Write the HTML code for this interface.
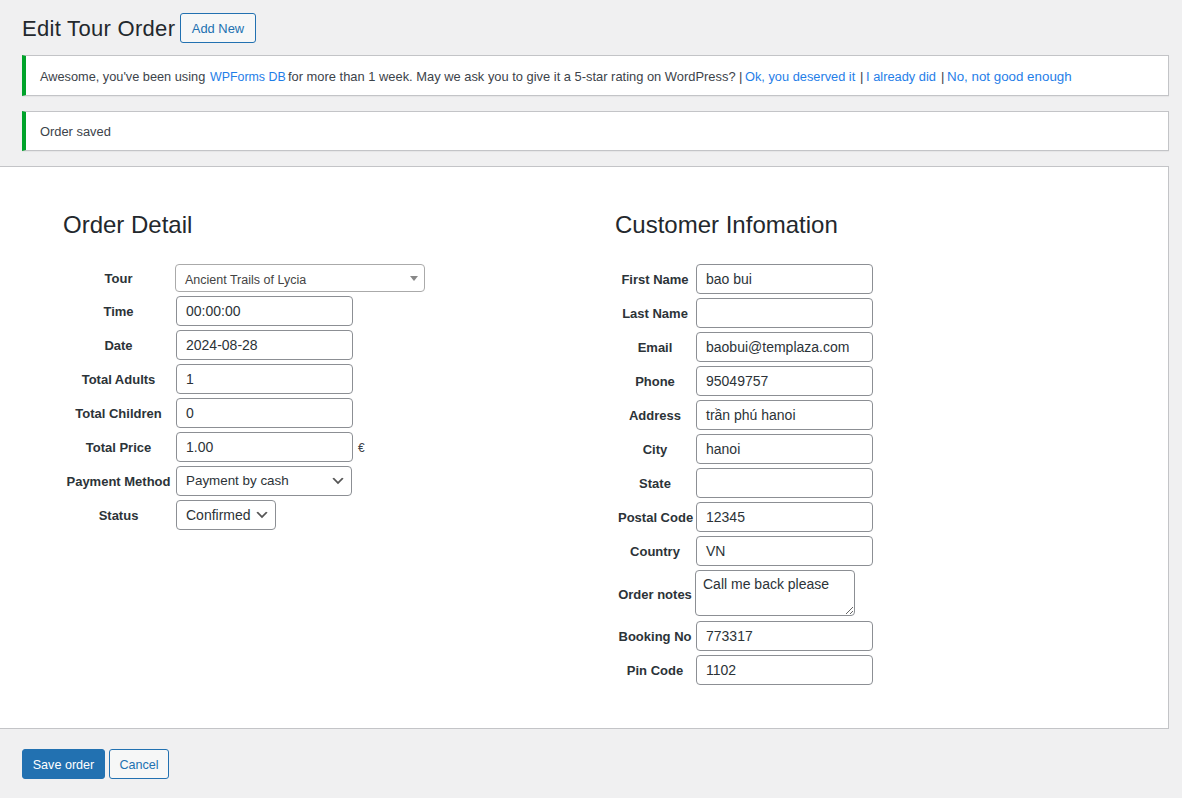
<!DOCTYPE html>
<html>
<head>
<meta charset="utf-8">
<style>
html,body{margin:0;padding:0;}
body{width:1182px;height:798px;overflow:hidden;position:relative;background:#f0f0f1;font-family:"Liberation Sans",sans-serif;color:#3c434a;font-size:13px;}
.abs{position:absolute;white-space:nowrap;}
h1{position:absolute;margin:0;left:22px;top:14px;font-size:22px;letter-spacing:0.3px;font-weight:400;line-height:30px;color:#23282d;}
.pta{position:absolute;left:180px;top:13px;width:76px;height:30px;box-sizing:border-box;border:1px solid #2271b1;border-radius:3px;background:#f6f7f7;color:#2271b1;font-size:12.9px;line-height:30px;text-align:center;}
.notice{position:absolute;left:22px;width:1147px;box-sizing:border-box;background:#fff;border:1px solid #c3c4c7;border-left:4px solid #00a32a;box-shadow:0 1px 1px rgba(0,0,0,.04);}
.notice p{position:absolute;left:14px;margin:0;font-size:12.88px;line-height:20px;white-space:nowrap;}
a{color:#1f7ee8;text-decoration:none;}
.nt{position:absolute;top:67px;font-size:13px;line-height:20px;white-space:nowrap;color:#3c434a;}
.nt.lk{color:#1f7ee8;}
.panel{position:absolute;left:-1px;top:166px;width:1170px;height:563px;box-sizing:border-box;background:#fff;border:1px solid #c3c4c7;}
.h{position:absolute;font-size:24px;line-height:30px;color:#23282d;white-space:nowrap;}
.lbl{position:absolute;font-size:13px;font-weight:bold;color:#2c3338;text-align:center;white-space:nowrap;line-height:20px;}
.inp{position:absolute;box-sizing:border-box;height:30px;border:1px solid #8c8f94;border-radius:4px;background:#fff;color:#2c3338;font-size:14px;line-height:28px;padding-left:9px;white-space:nowrap;}
.btn{position:absolute;box-sizing:border-box;height:30px;top:749px;border-radius:3px;font-size:12.6px;line-height:30px;text-align:center;}
</style>
</head>
<body>
<h1>Edit Tour Order</h1>
<div class="pta">Add New</div>

<div class="notice" style="top:55px;height:41px;"></div>
<div class="nt" style="left:40px;font-size:12.75px;">Awesome, you've been using</div>
<div class="nt lk" style="left:210px;font-size:12.4px;">WPForms DB</div>
<div class="nt" style="left:288px;font-size:12.9px;">for more than 1 week. May we ask you to give it a 5-star rating on WordPress?</div>
<div class="nt" style="left:739px;">|</div>
<div class="nt lk" style="left:745px;font-size:12.8px;">Ok, you deserved it</div>
<div class="nt" style="left:860px;">|</div>
<div class="nt lk" style="left:866px;font-size:12.85px;">I already did</div>
<div class="nt" style="left:941px;">|</div>
<div class="nt lk" style="left:947px;font-size:13.35px;">No, not good enough</div>
<div class="notice" style="top:111px;height:40px;"><p style="top:10px;">Order saved</p></div>

<div class="panel"></div>

<div class="h" style="left:63px;top:210px;">Order Detail</div>
<div class="h" style="left:615px;top:210px;">Customer Infomation</div>

<!-- left labels -->
<div class="lbl" style="left:65px;width:107px;top:269px;">Tour</div>
<div class="lbl" style="left:65px;width:107px;top:302px;">Time</div>
<div class="lbl" style="left:65px;width:107px;top:336px;">Date</div>
<div class="lbl" style="left:65px;width:107px;top:370px;">Total Adults</div>
<div class="lbl" style="left:65px;width:107px;top:404px;">Total Children</div>
<div class="lbl" style="left:65px;width:107px;top:438px;">Total Price</div>
<div class="lbl" style="left:65px;width:107px;top:472px;">Payment Method</div>
<div class="lbl" style="left:65px;width:107px;top:506px;">Status</div>

<div class="inp" style="left:175px;top:264px;width:250px;height:28px;border-color:#aaa;color:#444;font-size:12.5px;line-height:30px;padding-left:9px;">Ancient Trails of Lycia</div>
<div class="abs" style="left:410px;top:276px;width:0;height:0;border-style:solid;border-width:5px 4px 0 4px;border-color:#888 transparent transparent transparent;"></div>
<div class="inp" style="left:176px;top:296px;width:177px;">00:00:00</div>
<div class="inp" style="left:176px;top:330px;width:177px;">2024-08-28</div>
<div class="inp" style="left:176px;top:364px;width:177px;">1</div>
<div class="inp" style="left:176px;top:398px;width:177px;">0</div>
<div class="inp" style="left:176px;top:432px;width:177px;">1.00</div>
<div class="abs" style="left:358px;top:438px;font-size:12px;line-height:20px;color:#3c434a;">€</div>
<div class="inp" style="left:176px;top:466px;width:176px;font-size:13.4px;">Payment by cash</div>
<svg class="abs" style="left:330px;top:473px;" width="16" height="16" viewBox="0 0 20 20"><path d="M5 6l5 5 5-5 2 1-7 7-7-7 2-1z" fill="#555"/></svg>
<div class="inp" style="left:176px;top:500px;width:100px;">Confirmed</div>
<svg class="abs" style="left:254px;top:507px;" width="16" height="16" viewBox="0 0 20 20"><path d="M5 6l5 5 5-5 2 1-7 7-7-7 2-1z" fill="#555"/></svg>

<!-- right labels -->
<div class="lbl" style="left:618px;width:74px;top:270px;">First Name</div>
<div class="lbl" style="left:618px;width:74px;top:304px;">Last Name</div>
<div class="lbl" style="left:618px;width:74px;top:338px;">Email</div>
<div class="lbl" style="left:618px;width:74px;top:372px;">Phone</div>
<div class="lbl" style="left:618px;width:74px;top:406px;">Address</div>
<div class="lbl" style="left:618px;width:74px;top:440px;">City</div>
<div class="lbl" style="left:618px;width:74px;top:474px;">State</div>
<div class="lbl" style="left:618px;width:74px;top:508px;">Postal Code</div>
<div class="lbl" style="left:618px;width:74px;top:542px;">Country</div>
<div class="lbl" style="left:618px;width:74px;top:585px;">Order notes</div>
<div class="lbl" style="left:618px;width:74px;top:627px;">Booking No</div>
<div class="lbl" style="left:618px;width:74px;top:661px;">Pin Code</div>

<div class="inp" style="left:696px;top:264px;width:177px;">bao bui</div>
<div class="inp" style="left:696px;top:298px;width:177px;"></div>
<div class="inp" style="left:696px;top:332px;width:177px;">baobui@templaza.com</div>
<div class="inp" style="left:696px;top:366px;width:177px;">95049757</div>
<div class="inp" style="left:696px;top:400px;width:177px;">trần phú hanoi</div>
<div class="inp" style="left:696px;top:434px;width:177px;">hanoi</div>
<div class="inp" style="left:696px;top:468px;width:177px;"></div>
<div class="inp" style="left:696px;top:502px;width:177px;">12345</div>
<div class="inp" style="left:696px;top:536px;width:177px;">VN</div>
<textarea style="position:absolute;left:695px;top:570px;width:160px;height:46px;box-sizing:border-box;margin:0;border:1px solid #8c8f94;border-radius:4px;background:#fff;color:#2c3338;font-family:'Liberation Sans',sans-serif;font-size:14px;line-height:20px;padding:3px 7px;outline:none;">Call me back please</textarea>
<div class="inp" style="left:696px;top:621px;width:177px;">773317</div>
<div class="inp" style="left:696px;top:655px;width:177px;">1102</div>

<div class="btn" style="left:22px;width:83px;background:#2271b1;border:1px solid #2271b1;color:#fff;">Save order</div>
<div class="btn" style="left:109px;width:60px;background:#f6f7f7;border:1px solid #2271b1;color:#2271b1;">Cancel</div>
</body>
</html>
